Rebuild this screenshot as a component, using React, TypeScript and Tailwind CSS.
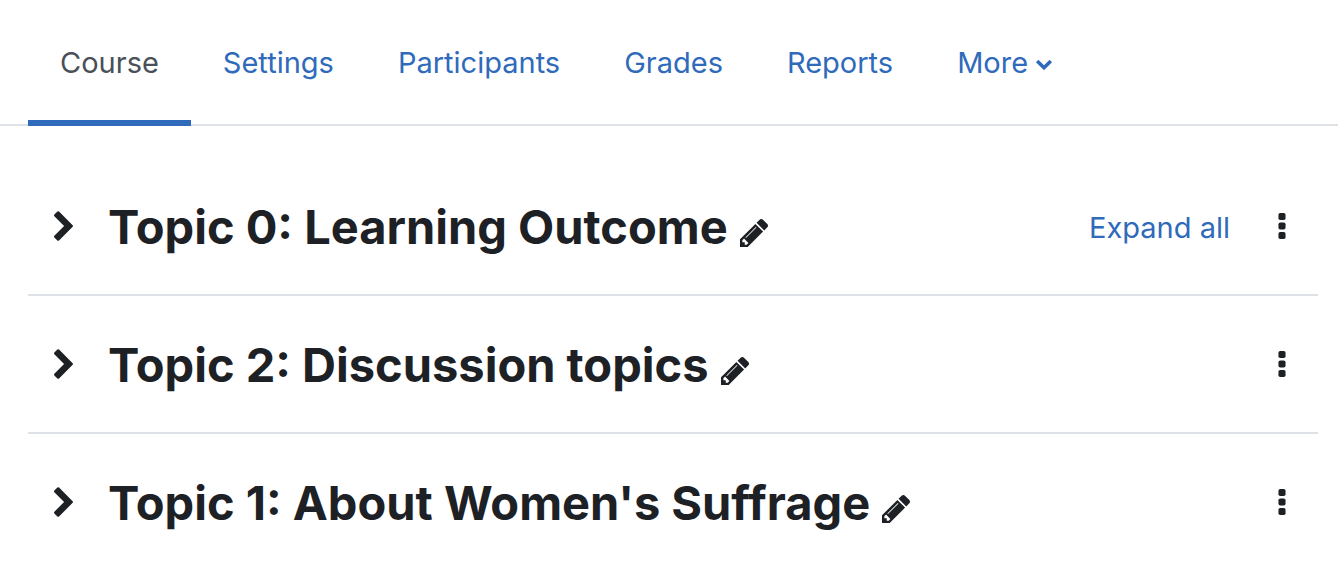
const ChevronDownIcon = () => (
  <svg
    viewBox="90 532 1612 1036"
    fill="currentColor"
    aria-hidden="true"
    className="mt-1 h-[10px] w-4"
  >
    <path d="M1683 808l-742 741q-19 19-45 19t-45-19l-742-741q-19-19-19-45.5t19-45.5l166-165q19-19 45-19t45 19l531 531 531-531q19-19 45-19t45 19l166 165q19 19 19 45.5t-19 45.5z" />
  </svg>
);

const ChevronRightIcon = () => (
  <svg
    viewBox="346 26 1036 1612"
    fill="currentColor"
    aria-hidden="true"
    className="h-[30px] w-[19px]"
  >
    <path d="M1363 877l-742 742q-19 19-45 19t-45-19l-166-166q-19-19-19-45t19-45l531-531-531-531q-19-19-19-45t19-45l166-166q19-19 45-19t45 19l742 742q19 19 19 45t-19 45z" />
  </svg>
);

const PencilIcon = () => (
  <svg
    viewBox="128 149 1515 1515"
    fill="currentColor"
    aria-hidden="true"
    className="size-7"
  >
    <path d="M491 1536l91-91-235-235-91 91v107h128v128h107zm523-928q0-22-22-22-10 0-17 7l-542 542q-7 7-7 17 0 22 22 22 10 0 17-7l542-542q7-7 7-17zm-54-192l416 416-832 832h-416v-416zm683 96q0 53-37 90l-166 166-416-416 166-165q36-38 90-38 53 0 91 38l235 234q37 39 37 91z" />
  </svg>
);

const EllipsisIcon = () => (
  <svg
    viewBox="704 128 384 1408"
    fill="currentColor"
    aria-hidden="true"
    className="h-[26px] w-2"
  >
    <rect x="704" y="128" width="384" height="384" rx="96" />
    <rect x="704" y="640" width="384" height="384" rx="96" />
    <rect x="704" y="1152" width="384" height="384" rx="96" />
  </svg>
);

const App = () => {
  const tabs = ["Settings", "Participants", "Grades", "Reports"];
  const topics = [
    { id: 0, title: "Topic 0: Learning Outcome" },
    { id: 2, title: "Topic 2: Discussion topics" },
    { id: 1, title: "Topic 1: About Women's Suffrage" },
  ];

  return (
    <div className="min-h-screen bg-white font-[Inter,sans-serif] text-[#1d2125]">
      <nav className="flex h-[126px] border-b-2 border-[#dee2e6] pl-7 text-[29px] text-[#2f6abb]">
        <a
          href="#course"
          aria-current="page"
          className="-mb-0.5 flex items-center border-b-6 border-[#2f6abb] px-8 pt-1.5 text-[#495057]"
        >
          Course
        </a>
        {tabs.map((tab) => (
          <a
            key={tab}
            href={`#${tab.toLowerCase()}`}
            className="flex items-center px-8 pt-0.5"
          >
            {tab}
          </a>
        ))}
        <button type="button" className="flex items-center gap-2 px-8 pt-0.5">
          More
          <ChevronDownIcon />
        </button>
      </nav>

      <main className="pt-8 pr-5 pl-7">
        {topics.map((topic, index) => (
          <section
            key={topic.id}
            className="flex h-[138px] items-center border-b-2 border-[#dee2e6] last:border-transparent"
          >
            <button
              type="button"
              aria-label={`Expand ${topic.title}`}
              className="flex w-[70px] justify-center"
            >
              <ChevronRightIcon />
            </button>
            <h2 className="ml-[10px] pt-0.5 text-[47px] font-bold">
              {topic.title}
            </h2>
            <button
              type="button"
              aria-label={`Edit ${topic.title}`}
              className="ml-3 pt-3.5"
            >
              <PencilIcon />
            </button>
            <div className="ml-auto flex items-center">
              {index === 0 && (
                <a
                  href="#expand"
                  className="mr-4 pt-1 text-[29px] text-[#2f6abb]"
                >
                  Expand all
                </a>
              )}
              <button
                type="button"
                aria-label={`Actions for ${topic.title}`}
                className="flex w-[72px] justify-center"
              >
                <EllipsisIcon />
              </button>
            </div>
          </section>
        ))}
      </main>
    </div>
  );
};

export default App;
